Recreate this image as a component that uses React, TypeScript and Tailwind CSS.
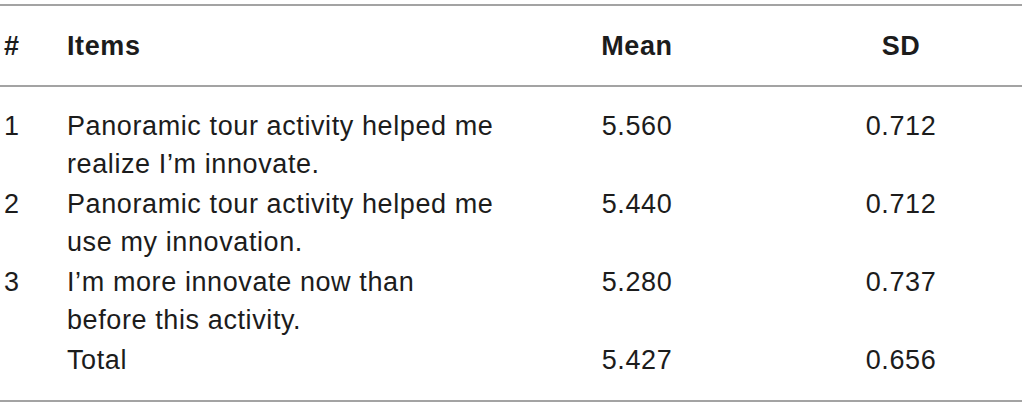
const rows = [
  { n: '1', item: ['Panoramic tour activity helped me', 'realize I’m innovate.'], mean: '5.560', sd: '0.712' },
  { n: '2', item: ['Panoramic tour activity helped me', 'use my innovation.'], mean: '5.440', sd: '0.712' },
  { n: '3', item: ['I’m more innovate now than', 'before this activity.'], mean: '5.280', sd: '0.737' },
  { n: '', item: ['Total'], mean: '5.427', sd: '0.656' },
];

const App = () => {
  return (
    <div className="w-[1022px] h-[417px] bg-white text-[#1c1c1c] font-['Liberation_Sans','Inter',sans-serif] text-[27px] leading-[38px] tracking-[0.6px]">
      <div className="pt-[4px]">
        <div className="border-t-2 border-b-2 border-[#a3a3a3] h-[83px] flex items-center pl-[4px] font-bold">
          <div className="w-[63px]">#</div>
          <div className="w-[493px]">Items</div>
          <div className="w-[154px] text-center">Mean</div>
          <div className="ml-[86px] w-[202px] text-center">SD</div>
        </div>
        <div className="pt-[20px] pb-[21px] flex flex-col gap-[2px] border-b-2 border-[#a3a3a3]">
          {rows.map((r, i) => (
            <div key={i} className="flex pl-[4px]">
              <div className="w-[63px]">{r.n}</div>
              <div className="w-[493px]">
                {r.item.map((l) => (
                  <div key={l}>{l}</div>
                ))}
              </div>
              <div className="w-[154px] text-center">{r.mean}</div>
              <div className="ml-[86px] w-[202px] text-center">{r.sd}</div>
            </div>
          ))}
        </div>
      </div>
    </div>
  );
};

export default App;
